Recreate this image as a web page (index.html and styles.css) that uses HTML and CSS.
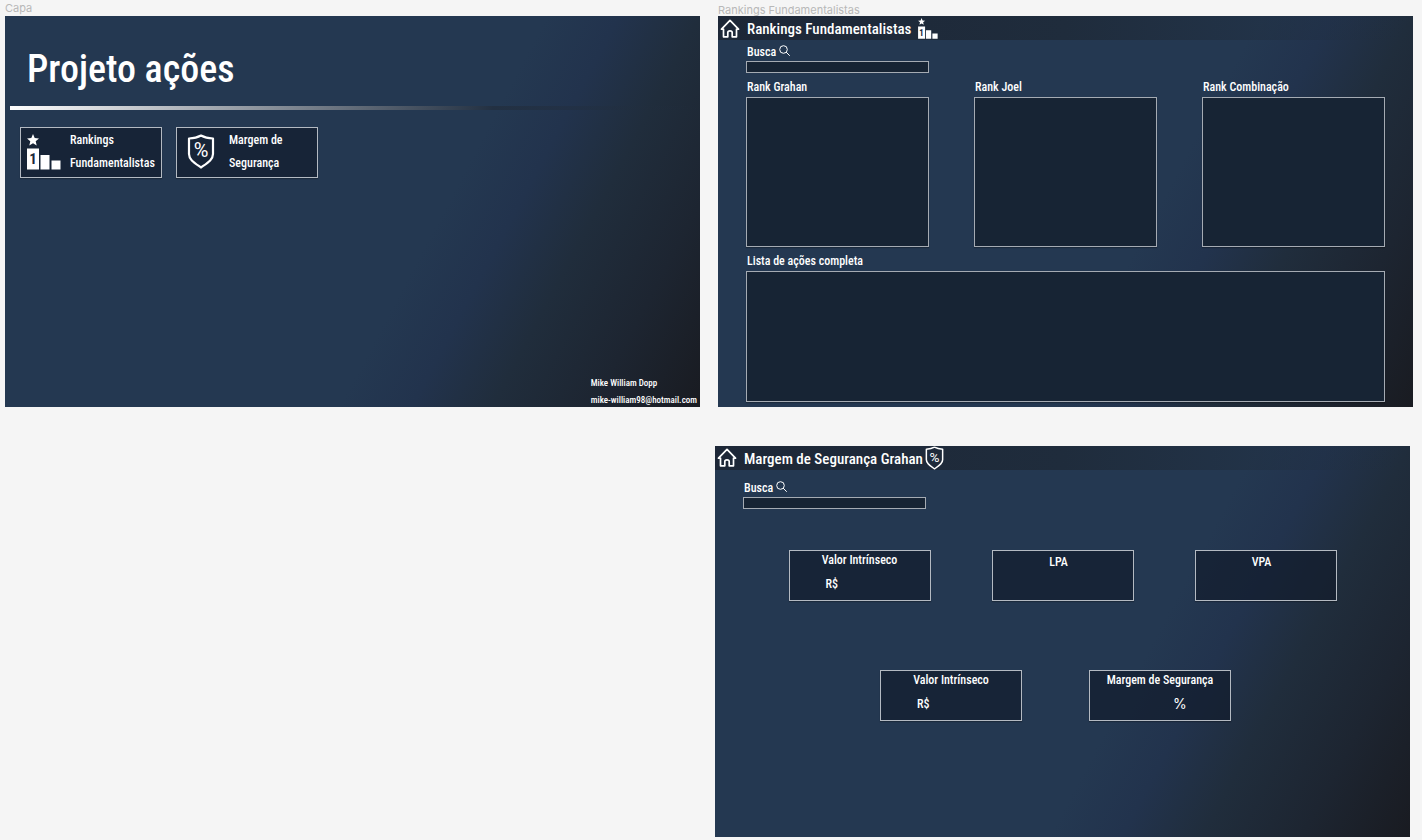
FILE: index.html
```html
<!DOCTYPE html>
<html lang="pt-BR">
<head>
<meta charset="utf-8">
<meta name="viewport" content="width=device-width, initial-scale=1">
<title>Projeto ações</title>
<link rel="stylesheet" href="styles.css">
</head>
<body>
<svg class="sprite" aria-hidden="true">
  <symbol id="home" viewBox="0 0 20 19">
    <path d="M1.500 10.200 10 1.300l8.500 8.900M3.500 10v7.800h4.300v-4.300q0-1.700 2.200-1.700t2.200 1.700v4.300h4.300V10M1.500 10.200h2M16.500 10.200h2" fill="none" stroke="currentColor" stroke-width="1.700" stroke-linejoin="round" stroke-linecap="round"/>
  </symbol>
  <symbol id="podium" viewBox="0 0 34 36">
    <path d="m6 0 1.700 4.100 4.300.4-3.300 2.800 1 4.300L6 9.300l-3.700 2.300 1-4.300L0 4.500l4.300-.4zM0 14.500h12v21H0zM13.500 21h9v14.500h-9zM24.500 26.500h9v9h-9z" fill="currentColor"/>
  </symbol>
  <symbol id="shield" viewBox="0 0 28 35">
    <path d="M14 1.500c3.500 2 7.500 2.800 12 3v15.500c0 5.500-5 8.500-12 13.500-7-5-12-8-12-13.500V4.500c4.500-.2 8.500-1 12-3z" fill="none" stroke="currentColor" stroke-width="2.200" stroke-linejoin="round"/>
  </symbol>
  <symbol id="lens" viewBox="0 0 11 11">
    <circle cx="4.500" cy="4.500" r="3.800" fill="none" stroke="currentColor"/>
    <path d="m7.300 7.300 3.200 3.200" stroke="currentColor" stroke-linecap="round"/>
  </symbol>
</svg>
<main class="board">
  <section class="frame">
    <h2 class="frame-name">Capa</h2>
    <div class="screen cover">
      <h1 class="cover-title">Projeto ações</h1>
      <hr class="rule">
      <nav class="menu">
        <a class="card menu-card" href="#rankings">
          <svg class="menu-podium" viewBox="0 0 34 36"><use href="#podium"/><text class="podium-number" x="6" y="30" text-anchor="middle">1</text></svg>
          <span>Rankings<br>Fundamentalistas</span>
        </a>
        <a class="card menu-card menu-card-margin" href="#margem">
          <svg class="menu-shield" viewBox="0 0 28 35"><use href="#shield"/><text class="shield-sign" x="14" y="23" text-anchor="middle">%</text></svg>
          <span>Margem de<br>Segurança</span>
        </a>
      </nav>
      <address class="contact">Mike William Dopp<br>mike-william98@hotmail.com</address>
    </div>
  </section>

  <section class="frame frame-rankings" id="rankings">
    <h2 class="frame-name frame-name-low">Rankings Fundamentalistas</h2>
    <div class="screen">
      <header class="bar">
        <a class="home" href="#" aria-label="Início"><svg class="home-icon"><use href="#home"/></svg></a>
        <h1 class="bar-title">Rankings Fundamentalistas</h1>
        <svg class="bar-podium" viewBox="0 0 34 36"><use href="#podium"/><text class="podium-number" x="6" y="30" text-anchor="middle">1</text></svg>
      </header>
      <div class="content">
        <form class="search">
          <label class="search-label" for="busca-rank">Busca <svg class="lens"><use href="#lens"/></svg></label>
          <input class="search-box" id="busca-rank" type="text">
        </form>
        <div class="ranks">
          <section class="rank"><h3 class="label">Rank Grahan</h3><div class="panel"></div></section>
          <section class="rank"><h3 class="label">Rank Joel</h3><div class="panel"></div></section>
          <section class="rank"><h3 class="label">Rank Combinação</h3><div class="panel"></div></section>
        </div>
        <section class="rank list"><h3 class="label">Lista de ações completa</h3><div class="panel"></div></section>
      </div>
    </div>
  </section>

  <section class="frame frame-margin" id="margem">
    <div class="screen">
      <header class="bar">
        <a class="home" href="#" aria-label="Início"><svg class="home-icon"><use href="#home"/></svg></a>
        <h1 class="bar-title">Margem de Segurança Grahan</h1>
        <svg class="bar-shield" viewBox="0 0 28 35"><use href="#shield"/><text class="shield-sign" x="14" y="23" text-anchor="middle">%</text></svg>
      </header>
      <div class="content content-margin">
        <form class="search">
          <label class="search-label" for="busca-margem">Busca <svg class="lens"><use href="#lens"/></svg></label>
          <input class="search-box" id="busca-margem" type="text">
        </form>
        <div class="values">
          <div class="card value"><h3 class="value-name">Valor Intrínseco</h3><p class="amount">R$</p></div>
          <div class="card value value-short"><h3 class="value-name">LPA</h3></div>
          <div class="card value value-short"><h3 class="value-name">VPA</h3></div>
        </div>
        <div class="values values-second">
          <div class="card value"><h3 class="value-name">Valor Intrínseco</h3><p class="amount">R$</p></div>
          <div class="card value"><h3 class="value-name">Margem de Segurança</h3><p class="percent">%</p></div>
        </div>
      </div>
    </div>
  </section>
</main>
</body>
</html>
```
FILE: styles.css
```css
* { box-sizing: border-box; }

body {
  margin: 0;
  background: #f5f5f5;
  color: #fff;
  font-family: "Roboto Condensed", "Liberation Sans Narrow", "Liberation Sans", sans-serif;
  font-size: 12px;
  font-weight: 500;
}

h1, h2, h3, p, form { margin: 0; font-weight: 500; }
a { color: inherit; text-decoration: none; }
svg { display: block; flex: none; }
.sprite { position: absolute; width: 0; height: 0; }

.board {
  display: grid;
  grid-template-columns: 695fr 698fr;
  column-gap: 15px;
  row-gap: 39px;
  padding: 0 9px 3px 5px;
}
.frame-rankings { padding-left: 3px; }
.frame-margin { grid-column: 2; padding-right: 3px; }

.frame-name {
  height: 16px;
  font: 11px/16px Inter, sans-serif;
  color: #b8b8b8;
}
.frame-name-low { line-height: 20px; }

.screen {
  display: flex;
  flex-direction: column;
  aspect-ratio: 16 / 9;
  background: linear-gradient(118deg, #243851 60%, #22334d 68%, #202d3c 77%, #1d2531 88%, #191b21);
}

.card {
  width: 142px;
  height: 51px;
  background: rgba(17, 26, 42, 0.65);
  border: 1px solid #b4bac2;
  box-shadow: 0 1px 1px rgba(0, 0, 0, 0.25);
}

/* Cover */
.cover-title {
  padding: 27px 0 0 22px;
  font-size: 38px;
  line-height: 52px;
}
.rule {
  width: calc(100% - 5px);
  height: 4px;
  margin: 11px 0 0 5px;
  border: 0;
  background: linear-gradient(90deg, #fff, rgba(34, 46, 62, 0.8) 70%, rgba(30, 41, 57, 0));
}
.menu { display: flex; gap: 14px; padding: 17px 15px 0; }
.menu-card {
  display: flex;
  align-items: center;
  gap: 9px;
  padding: 0 0 2px 6px;
  line-height: 23px;
}
.menu-card-margin { gap: 14px; padding-left: 10px; }
.menu-podium { width: 34px; height: 36px; }
.menu-shield { width: 28px; height: 35px; }
.contact {
  align-self: flex-end;
  margin: auto 0 -2px;
  padding-right: 3px;
  font-size: 9px;
  line-height: 17px;
  font-style: normal;
}

/* Top bar */
.bar {
  display: flex;
  align-items: center;
  height: 24px;
  padding-left: 2px;
  background: linear-gradient(90deg, #1d2737, #1f2c3c 50%, rgba(31, 44, 60, 0));
}
.home { margin-right: 7px; }
.home-icon { width: 20px; height: 19px; }
.bar-title { padding-top: 2px; font-size: 15px; line-height: 26px; }
.bar-podium { width: 22px; height: 21px; margin-left: 6px; }
.bar-shield { width: 19px; height: 24px; margin-left: 2px; }
.podium-number { font: 700 15px "Roboto Condensed", "Liberation Sans", sans-serif; fill: #19273b; }
.shield-sign { font: 20px Roboto, sans-serif; fill: #fff; }

/* Rankings */
.content {
  display: flex;
  flex: 1;
  flex-direction: column;
  padding: 4px 28px 5px;
}
.search { width: 183px; }
.search-label { display: flex; gap: 3px; padding-left: 1px; line-height: 17px; }
.lens { width: 11px; height: 11px; margin-top: 1px; }
.search-box {
  display: block;
  width: 100%;
  height: 12px;
  padding: 0 4px;
  border: 1px solid #a5abb3;
  border-radius: 0;
  background: #172434;
  color: #fff;
  font-size: 10px;
}
.ranks {
  display: grid;
  flex: 174;
  grid-template-columns: repeat(3, 1fr);
  column-gap: 45px;
}
.rank { display: flex; flex-direction: column; }
.list { flex: 155; }
.label { padding: 4px 0 0 1px; font-size: 12px; line-height: 20px; }
.panel {
  flex: 1;
  background: #172434;
  border: 1px solid #a5abb3;
  box-shadow: 0 1px 1px rgba(0, 0, 0, 0.25);
}

/* Safety margin */
.content-margin { padding-top: 10px; }
.values {
  display: flex;
  justify-content: center;
  gap: 61px;
  padding-top: 41px;
}
.values-second { gap: 67px; padding: 69px 14px 0 0; }
.value-name { font-size: 12px; line-height: 18px; text-align: center; }
.value-short { padding: 2px 8px 0 0; }
.amount { padding-left: 36px; line-height: 30px; }
.percent { padding-left: 83px; font: 14px/30px Inter, sans-serif; }
```
